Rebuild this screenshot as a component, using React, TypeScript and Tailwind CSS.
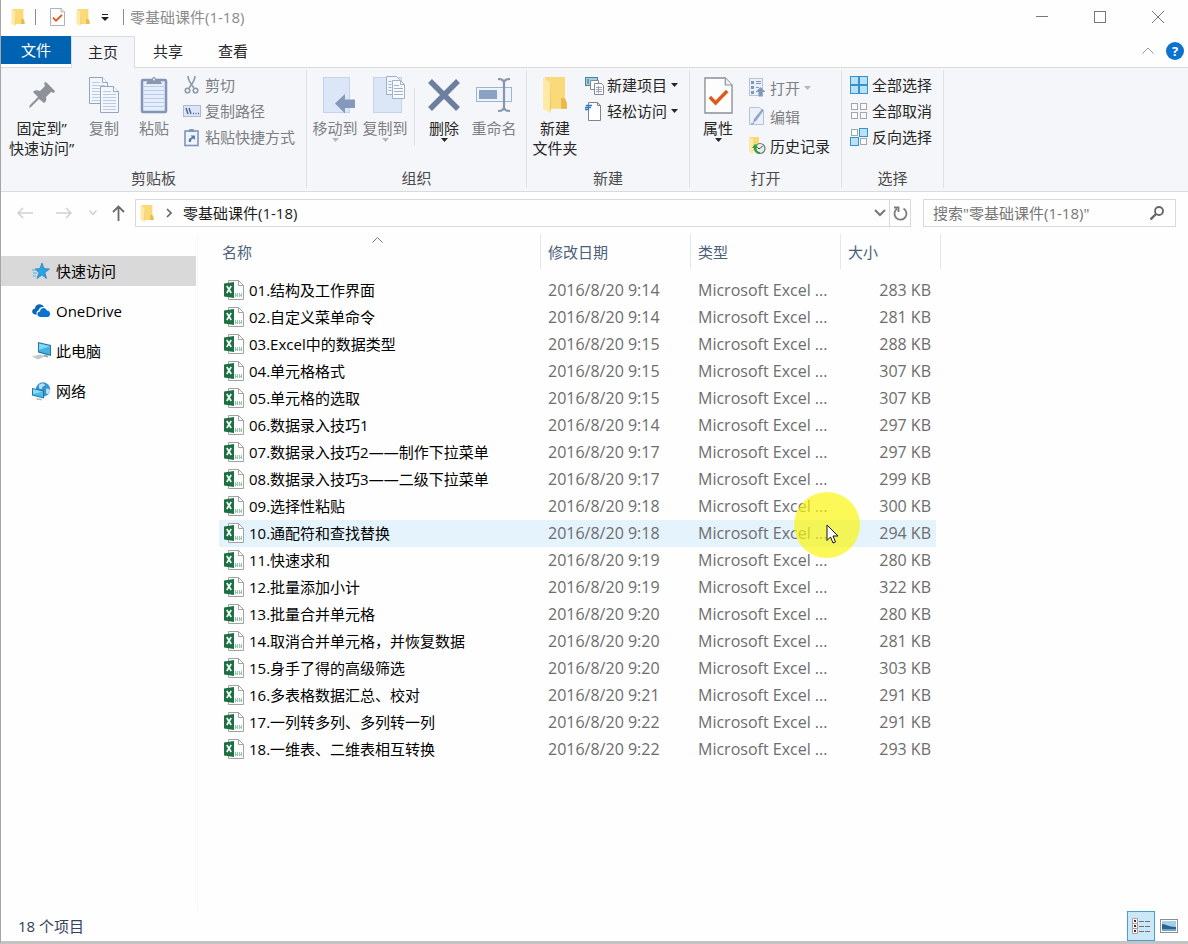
import { ReactNode, useState } from "react";
import clsx from "clsx";

interface FileProps {
    name: string,
    date: string,
    size: string
}

interface ButtonProps {
    icon: ReactNode,
    label: ReactNode,
    disabled?: boolean,
    arrow?: boolean,
    className?: string
}

interface GroupProps {
    label: string,
    className: string,
    children: ReactNode
}

const files: FileProps[] = [
    { name: "01.结构及工作界面", date: "2016/8/20 9:14", size: "283 KB" },
    { name: "02.自定义菜单命令", date: "2016/8/20 9:14", size: "281 KB" },
    { name: "03.Excel中的数据类型", date: "2016/8/20 9:15", size: "288 KB" },
    { name: "04.单元格格式", date: "2016/8/20 9:15", size: "307 KB" },
    { name: "05.单元格的选取", date: "2016/8/20 9:15", size: "307 KB" },
    { name: "06.数据录入技巧1", date: "2016/8/20 9:14", size: "297 KB" },
    { name: "07.数据录入技巧2——制作下拉菜单", date: "2016/8/20 9:17", size: "297 KB" },
    { name: "08.数据录入技巧3——二级下拉菜单", date: "2016/8/20 9:17", size: "299 KB" },
    { name: "09.选择性粘贴", date: "2016/8/20 9:18", size: "300 KB" },
    { name: "10.通配符和查找替换", date: "2016/8/20 9:18", size: "294 KB" },
    { name: "11.快速求和", date: "2016/8/20 9:19", size: "280 KB" },
    { name: "12.批量添加小计", date: "2016/8/20 9:19", size: "322 KB" },
    { name: "13.批量合并单元格", date: "2016/8/20 9:20", size: "280 KB" },
    { name: "14.取消合并单元格，并恢复数据", date: "2016/8/20 9:20", size: "281 KB" },
    { name: "15.身手了得的高级筛选", date: "2016/8/20 9:20", size: "303 KB" },
    { name: "16.多表格数据汇总、校对", date: "2016/8/20 9:21", size: "291 KB" },
    { name: "17.一列转多列、多列转一列", date: "2016/8/20 9:22", size: "291 KB" },
    { name: "18.一维表、二维表相互转换", date: "2016/8/20 9:22", size: "293 KB" },
]

/* ---------- icons ---------- */

function FolderIcon({ width = 14, height = 17 }) {
    return (
        <svg width={width} height={height} viewBox="0 0 26 34" preserveAspectRatio="none">
            <path d="M3 0h20v23l2 1v6H3z" fill="#f9d978" />
            <path d="M19 20h4l2 5v5h-6z" fill="#e9b94c" />
            <path d="M1 1l7 4v29l-7-4z" fill="#fdeaa6" />
            <path d="M8 5l1 25-1 4z" fill="#eec35c" />
        </svg>
    )
}

function CheckDocIcon({ width = 15, height = 18 }) {
    return (
        <svg width={width} height={height} viewBox="0 0 30 37" preserveAspectRatio="none">
            <path d="M1 1h21l7 7v28H1z" fill="#fdfdfd" stroke="#8a8f98" strokeWidth="1.4" />
            <path d="M22 1v7h7" fill="#eef0f3" stroke="#8a8f98" strokeWidth="1.2" />
            <path d="M6 20l6 6L24 14" fill="none" stroke="#dc5a1c" strokeWidth="3.6" />
        </svg>
    )
}

function PinIcon() {
    return (
        <svg width="26" height="26" viewBox="0 0 26 26">
            <path d="M17 0l9 9-1 2-3-1-5 5c1 2 0 5-2 6l-5-4-8 8-2 1 1-3 8-8-5-5c2-2 4-2 7-1l5-5-1-3z" fill="#8d9299" />
        </svg>
    )
}

function PageLines({ x, y, fill = "#f3f7fc" }: { x: number, y: number, fill?: string }) {
    return (
        <g transform={`translate(${x} ${y})`}>
            <path d="M.5.5h13l5 5v21H.5z" fill={fill} stroke="#93a5c3" />
            <path d="M13.5.5v5h5" fill="#fff" stroke="#93a5c3" />
            <path d="M3 5.500h8M3 8.500h13M3 11.500h13M3 14.500h13M3 17.500h13M3 20.500h13M3 23.500h13" stroke="#b9cbe6" />
        </g>
    )
}

function CopyIcon() {
    return (
        <svg width="32" height="38" viewBox="0 0 32 38">
            <PageLines x={1} y={1} />
            <PageLines x={12} y={10} />
        </svg>
    )
}

function PasteIcon() {
    return (
        <svg width="28" height="38" viewBox="0 0 28 38">
            <rect x="2" y="4" width="24" height="32" rx="1" fill="#e4edf9" stroke="#8195b8" strokeWidth="2.500" />
            <path d="M4 10.500h20M4 14.500h20M4 18.500h20M4 22.500h20M4 26.500h20M4 30.500h20" stroke="#bccdea" />
            <path d="M6 8l2-4h4c0-4 4-4 4 0h4l2 4z" fill="#8b98a9" />
            <circle cx="14" cy="3.500" r="1" fill="#f5f6f9" />
        </svg>
    )
}

function ScissorsIcon() {
    return (
        <svg width="18" height="20" viewBox="0 0 18 20" fill="none" stroke="#8d9aab" strokeWidth="1.600">
            <path d="M5 1c0 4 2 7 6 12M12 1c0 4-2 7-6 12" />
            <circle cx="4.500" cy="15.500" r="2.300" />
            <circle cx="12.500" cy="15.500" r="2.300" />
        </svg>
    )
}

function PathIcon() {
    return (
        <svg width="18" height="12" viewBox="0 0 18 12">
            <rect x=".5" y=".5" width="17" height="11" fill="#dbe6f5" stroke="#a9bad5" />
            <path d="M3 3l2 6M6 3l2 6" stroke="#49648f" strokeWidth="1.400" />
            <path d="M10 8.500h1M12.500 8.500h1M15 8.500h1" stroke="#49648f" strokeWidth="1.400" />
        </svg>
    )
}

function ShortcutIcon() {
    return (
        <svg width="18" height="20" viewBox="0 0 18 20">
            <rect x="2" y="4" width="13" height="14.500" fill="#eef4fb" stroke="#8195b8" strokeWidth="1.600" />
            <path d="M5 5l1.500-3h4L12 5z" fill="#8195b8" />
            <path d="M6 15c-1-3 1-4 3-5L7.500 8.500H12V13l-1.500-1.500C9 12 7.500 13 8 15z" fill="#587bb0" />
        </svg>
    )
}

function MoveIcon() {
    return (
        <svg width="40" height="38" viewBox="0 0 40 38">
            <rect x="8.500" y="1.500" width="26" height="35" fill="#dbe7f6" stroke="#c3d4ec" />
            <path d="M20 27.500L30 18v5.500h10V32H30v5.500z" fill="#8499bb" />
        </svg>
    )
}

function CopyToIcon() {
    return (
        <svg width="40" height="38" viewBox="0 0 40 38">
            <rect x="8.500" y="1.500" width="28" height="35" fill="#dbe7f6" stroke="#c3d4ec" />
            <path d="M21.500.5h10l3 3v15h-13z" fill="#f3f7fc" stroke="#9fb0cc" />
            <path d="M27.500 4.500h8l4 4v14h-12z" fill="#f8fafd" stroke="#9fb0cc" />
            <path d="M35.500 4.500v4h4M29 9.500h5M29 12.500h9M29 15.500h9M29 18.500h9M23.500 5.500h3M23.500 8.500h3M23.500 11.500h3M23.500 14.500h3" stroke="#9fb0cc" fill="none" />
        </svg>
    )
}

function DeleteIcon() {
    return (
        <svg width="32" height="34" viewBox="0 0 32 34">
            <path d="M2 3l28 28M30 3L2 31" stroke="#6c7f9f" strokeWidth="5.500" />
        </svg>
    )
}

function RenameIcon() {
    return (
        <svg width="38" height="36" viewBox="0 0 38 36">
            <rect x="1.500" y="10.500" width="35" height="14" fill="#eef4fb" stroke="#9fb3d3" />
            <rect x="4" y="13" width="18" height="9" fill="#8ba1c4" />
            <path d="M23 2c4 0 6 1 6 4v24c0 3-2 4-6 4M35 2c-4 0-6 1-6 4M29 30c0 3 2 4 6 4" fill="none" stroke="#8796ac" strokeWidth="2.200" />
        </svg>
    )
}

function NewItemIcon() {
    return (
        <svg width="19" height="19" viewBox="0 0 19 19">
            <rect x=".5" y="1.500" width="12" height="8" fill="#9fd3e4" stroke="#5b7e92" />
            <path d="M3 3v5" stroke="#2c6a86" />
            <path d="M5.500 4.500h8v9h-8z" fill="#fff" stroke="#7f8a96" />
            <path d="M9.500 7.500h7l2 2v9h-9z" fill="#fff" stroke="#7f8a96" />
            <path d="M11 11.500h6M11 13.500h6M11 15.500h6M13.500 10v7" stroke="#a8a0b0" />
        </svg>
    )
}

function EasyAccessIcon() {
    return (
        <svg width="19" height="19" viewBox="0 0 19 19">
            <path d="M3.500.5h9l3 3v15h-12z" fill="#fff" stroke="#7f8590" />
            <path d="M12.500.5v3h3" fill="none" stroke="#7f8590" />
            <path d="M1 3.500h6M0 5.500h6M0 7.500h4" stroke="#2b78c5" strokeWidth="1.400" />
        </svg>
    )
}

function OpenIcon() {
    return (
        <svg width="18" height="19" viewBox="0 0 18 19">
            <rect x="1.500" y=".5" width="13" height="17" fill="#eaf1fa" stroke="#b4c3da" />
            <path d="M3 3h3v3H3zM3 8h3v3H3zM3 13h3v3H3z" fill="#8297b8" />
            <path d="M8 3.500h5M8 5.500h5M8 9.500h3" stroke="#8297b8" />
            <path d="M12.500 9l5 5h-3v4.500h-4V14h-3z" fill="#8297b8" />
        </svg>
    )
}

function EditIcon() {
    return (
        <svg width="18" height="19" viewBox="0 0 18 19">
            <path d="M1.500.5h10l4 4v13h-14z" fill="#eaf1fa" stroke="#b4c3da" />
            <path d="M16 3L8 14l-3 2 1-4 8-10z" fill="#8fa5c6" />
            <path d="M3 17l3-1" stroke="#8297b8" />
        </svg>
    )
}

function HistoryIcon() {
    return (
        <svg width="18" height="19" viewBox="0 0 18 19">
            <path d="M1 1h10v14H1z" fill="#f9d978" />
            <path d="M1 1l4 2v15l-4-2z" fill="#fdeaa6" />
            <circle cx="12" cy="12.500" r="5" fill="#e8efe9" stroke="#6e8072" strokeWidth="1.200" />
            <path d="M12 12.500l2.500-2.500M12 12.500h-2" stroke="#444" />
            <path d="M12 18c-4 0-6-3-6-6H4l3-4 3.500 4h-2c0 2 1 4 3.500 4z" fill="#2f9e44" />
        </svg>
    )
}

function Squares({ filled }: { filled: boolean[] }) {
    const spots = [[1, 1], [10, 1], [1, 10], [10, 10]]
    return (
        <svg width="19" height="19" viewBox="0 0 19 19">
            {spots.map(([x, y], i) => (
                <rect
                    key={i}
                    x={filled[i] ? x - 0.5 : x + 0.5}
                    y={filled[i] ? y - 0.5 : y + 0.5}
                    width={filled[i] ? 8 : 6}
                    height={filled[i] ? 8 : 6}
                    fill={filled[i] ? "#b9e1f8" : "#fbfbfc"}
                    stroke={filled[i] ? "#3592cf" : "#a3a6ab"}
                />
            ))}
        </svg>
    )
}

function ExcelIcon() {
    return (
        <svg className="shrink-0" width="20" height="20" viewBox="0 0 20 20">
            <path d="M4.500.5h10l5 5v14h-15z" fill="#fff" stroke="#a3a3a3" />
            <path d="M14.500.5v5h5" fill="none" stroke="#a3a3a3" />
            <path d="M11.500 13v4M13.500 13v4M11.500 15.500h2M15.500 13v4M17.500 13v4M15.500 15.500h2" stroke="#93c9a9" />
            <path d="M0 3.500L10 2v16L0 16.500z" fill="#1d7044" />
            <path d="M2.800 6l4.400 7M7.200 6l-4.400 7" stroke="#fff" strokeWidth="1.600" />
        </svg>
    )
}

function StarIcon() {
    return (
        <svg width="18" height="18" viewBox="0 0 18 18">
            <path d="M10 1l2 5.500 5.500.5-4.500 3.500 1.500 6L10 13l-5 3.500 2-6L3 7l5-.5z" fill="#2ea3e3" stroke="#1b7fbd" strokeWidth=".7" />
            <path d="M0 8h5M1 11h4M1 14h3" stroke="#4bb0e8" />
        </svg>
    )
}

function OneDriveIcon() {
    return (
        <svg width="18" height="14" viewBox="0 0 18 14">
            <path d="M5 10.500H3C-1 9.500-.5 5 3 4.500 3.500-.5 10-1 12 3 8 2.500 7 5 6.500 6.500 4.500 7 4 9 5 10.500z" fill="#0a64b8" />
            <path d="M8 13c-3.500-.5-3.500-5.500 0-5.500C8.500 3 14 3 14.800 6.500 19 6.500 19 12.800 15.500 13z" fill="#0a72cf" />
        </svg>
    )
}

function ComputerIcon() {
    return (
        <svg width="20" height="18" viewBox="0 0 20 18">
            <path d="M6 0l13 3v11L6 10.500z" fill="#2079ad" />
            <path d="M7 1.500l11 2.500v8.500L7 9.500z" fill="#45b3e0" />
            <path d="M7 1.500l11 2.500L7 8z" fill="#86d8f2" />
            <path d="M0 14.500l8-2 6 1.500-8 3.500z" fill="#c3cacf" />
            <path d="M12 12.500l4 1v2l-4-1z" fill="#9aa6ad" />
        </svg>
    )
}

function NetworkIcon() {
    return (
        <svg width="20" height="19" viewBox="0 0 20 19">
            <circle cx="11" cy="7.500" r="7.200" fill="#3b94d2" />
            <path d="M7 3c2-2 5-2 6 0-1 2-3 1-3 3s-2 1-3 0zM14 7c2-1 4 0 4 2-1 3-3 4-4 2z" fill="#b9e0f5" />
            <path d="M0 6l12 2.500v8L0 13.500z" fill="#1b75ae" />
            <path d="M1 7.200l10 2.200v5.800l-10-2.500z" fill="#4fbbe6" />
            <path d="M1 7.200l10 2.200-10 2.600z" fill="#8bdaf3" />
            <path d="M5 16l5 1v1.500l-6-1z" fill="#b5bfc5" />
        </svg>
    )
}

function Caret({ className }: { className?: string }) {
    return (
        <svg className={clsx("shrink-0", className)} width="7" height="4" viewBox="0 0 7 4">
            <path d="M0 0h7L3.500 4z" fill="currentColor" />
        </svg>
    )
}

/* ---------- ribbon ---------- */

function BigButton({ icon, label, disabled, arrow, className = "w-[50px]" }: ButtonProps) {
    return (
        <button className={clsx("flex shrink-0 flex-col items-center pt-2 whitespace-nowrap", className, disabled ? "text-[#7c7f84]" : "text-[#262626]")}>
            <span className="flex h-[38px] items-center">{icon}</span>
            <span className="mt-1 leading-5">{label}</span>
            {arrow && <Caret className={disabled ? "text-[#b4b6ba]" : "text-[#262626]"} />}
        </button>
    )
}

function SmallButton({ icon, label, disabled, arrow, className = "h-[26px]" }: ButtonProps) {
    return (
        <button className={clsx("flex items-center whitespace-nowrap", className, disabled ? "text-[#7c7f84]" : "text-[#262626]")}>
            <span className="flex w-[22px] shrink-0">{icon}</span>
            <span>{label}</span>
            {arrow && <Caret className={clsx("ml-1", disabled ? "text-[#b4b6ba]" : "text-[#262626]")} />}
        </button>
    )
}

function Group({ label, className, children }: GroupProps) {
    return (
        <section className={clsx("mt-0.5 mb-[3px] flex shrink-0 flex-col border-r border-[#dfe1e5]", className)}>
            <div className="-mt-0.5 flex flex-1 pl-[3px]">{children}</div>
            <h2 className="text-center leading-5 text-[#4a4a4a]">{label}</h2>
        </section>
    )
}

function Ribbon() {
    return (
        <div className="flex h-[125px] overflow-hidden border-y border-[#dadbdc] bg-[#f5f6f9]">
            <Group label="剪贴板" className="w-[306px]">
                <BigButton icon={<PinIcon />} label={<>固定到”<br />快速访问”</>} className="w-[75px]" />
                <BigButton icon={<CopyIcon />} label="复制" disabled />
                <BigButton icon={<PasteIcon />} label="粘贴" disabled />
                <div className="flex flex-col pt-1 pl-1">
                    <SmallButton icon={<ScissorsIcon />} label="剪切" disabled />
                    <SmallButton icon={<PathIcon />} label="复制路径" disabled />
                    <SmallButton icon={<ShortcutIcon />} label="粘贴快捷方式" disabled />
                </div>
            </Group>
            <Group label="组织" className="w-[220px]">
                <BigButton icon={<MoveIcon />} label="移动到" disabled arrow />
                <BigButton icon={<CopyToIcon />} label="复制到" disabled arrow />
                <div className="mx-1 mt-5 h-[58px] w-px shrink-0 bg-[#dfe1e5]" />
                <BigButton icon={<DeleteIcon />} label="删除" arrow />
                <BigButton icon={<RenameIcon />} label="重命名" disabled />
            </Group>
            <Group label="新建" className="w-[163px]">
                <BigButton icon={<FolderIcon width={26} height={36} />} label={<>新建<br />文件夹</>} />
                <div className="flex flex-col pt-1 pl-[5px]">
                    <SmallButton icon={<NewItemIcon />} label="新建项目" arrow />
                    <SmallButton icon={<EasyAccessIcon />} label="轻松访问" arrow />
                </div>
            </Group>
            <Group label="打开" className="w-[152px]">
                <BigButton icon={<CheckDocIcon width={29} height={37} />} label="属性" arrow />
                <div className="flex flex-col pt-[5px] pl-[5px]">
                    <SmallButton icon={<OpenIcon />} label="打开" disabled arrow className="h-[29px]" />
                    <SmallButton icon={<EditIcon />} label="编辑" disabled className="h-[29px]" />
                    <SmallButton icon={<HistoryIcon />} label="历史记录" className="h-[29px]" />
                </div>
            </Group>
            <Group label="选择" className="w-[102px]">
                <div className="flex flex-col pt-1 pl-[5px]">
                    <SmallButton icon={<Squares filled={[true, true, true, true]} />} label="全部选择" />
                    <SmallButton icon={<Squares filled={[false, false, false, false]} />} label="全部取消" />
                    <SmallButton icon={<Squares filled={[false, true, true, false]} />} label="反向选择" />
                </div>
            </Group>
        </div>
    )
}

/* ---------- window parts ---------- */

function TitleBar() {
    return (
        <header className="flex h-9 items-center pr-px pb-0.5 pl-[10px]">
            <FolderIcon />
            <span className="mx-2.5 h-4 w-px bg-[#8c8c8c]" />
            <button aria-label="属性" className="ml-1"><CheckDocIcon /></button>
            <button aria-label="新建文件夹" className="ml-[11px]"><FolderIcon /></button>
            <button aria-label="自定义快速访问工具栏" className="ml-[11px]">
                <svg width="8" height="8" viewBox="0 0 8 8">
                    <path d="M1 1h6v1H1zM0 4h8L4 8z" fill="#222" />
                </svg>
            </button>
            <span className="ml-3.5 h-4 w-px bg-[#8c8c8c]" />
            <h1 className="ml-1.5 flex-1 text-[#8b8b8b]">零基础课件(1-18)</h1>
            <button aria-label="最小化" className="flex w-[58px] justify-center">
                <svg width="12" height="12" viewBox="0 0 12 12"><path d="M0 5.500h12" stroke="#777" /></svg>
            </button>
            <button aria-label="最大化" className="flex w-[58px] justify-center">
                <svg width="12" height="12" viewBox="0 0 12 12"><rect x=".5" y=".5" width="11" height="11" fill="none" stroke="#777" /></svg>
            </button>
            <button aria-label="关闭" className="flex w-[58px] justify-center">
                <svg width="12" height="12" viewBox="0 0 12 12"><path d="M0 0l12 12M12 0L0 12" stroke="#777" /></svg>
            </button>
        </header>
    )
}

function Tabs() {
    return (
        <nav className="flex h-[31px] text-[#262626]">
            <button className="h-7 w-[70px] bg-[#0063b1] text-white">文件</button>
            <button className="relative z-10 -mb-px w-16 border-x border-t border-[#dadbdc] bg-[#f5f6f9] pb-0.5">主页</button>
            <button className="w-[66px] pb-0.5">共享</button>
            <button className="w-[64px] pb-0.5">查看</button>
            <div className="ml-auto flex items-center gap-3 pr-1 pb-0.5">
                <button aria-label="最小化功能区">
                    <svg width="12" height="7" viewBox="0 0 12 7"><path d="M.5 6.500L6 1l5.500 5.500" fill="none" stroke="#999" /></svg>
                </button>
                <button className="size-[18px] rounded-full bg-[#0c72cf] text-[13px] leading-[18px] font-bold text-white">?</button>
            </div>
        </nav>
    )
}

function AddressBar() {
    return (
        <div className="flex h-[42px] items-center pr-3 pl-4">
            <button aria-label="后退">
                <svg width="16" height="12" viewBox="0 0 16 12" fill="none" stroke="#cfcfcf" strokeWidth="1.400"><path d="M1 6h15M6 1L1 6l5 5" /></svg>
            </button>
            <button aria-label="前进" className="ml-[23px]">
                <svg width="16" height="12" viewBox="0 0 16 12" fill="none" stroke="#cfcfcf" strokeWidth="1.400"><path d="M0 6h15M10 1l5 5-5 5" /></svg>
            </button>
            <button aria-label="最近浏览的位置" className="ml-[17px]">
                <svg width="8" height="6" viewBox="0 0 8 6" fill="none" stroke="#cfcfcf" strokeWidth="1.400"><path d="M.5.500L4 4.500 7.500.5" /></svg>
            </button>
            <button aria-label="上移" className="ml-[15px]">
                <svg width="13" height="16" viewBox="0 0 13 16" fill="none" stroke="#6a6a6a" strokeWidth="1.800"><path d="M6.500 16V1.500M1 7l5.500-5.500L12 7" /></svg>
            </button>
            <div className="ml-[10px] flex h-7 flex-1 items-center border border-[#d9d9d9] pl-1">
                <FolderIcon />
                <svg className="ml-3 shrink-0" width="6" height="10" viewBox="0 0 6 10" fill="none" stroke="#666" strokeWidth="1.600"><path d="M1 1l4 4-4 4" /></svg>
                <span className="ml-[11px] flex-1 text-[#1a1a1a]">零基础课件(1-18)</span>
                <button aria-label="以前的位置" className="mr-[3px]">
                    <svg width="12" height="8" viewBox="0 0 12 8" fill="none" stroke="#777" strokeWidth="2"><path d="M1 1l5 5 5-5" /></svg>
                </button>
                <button aria-label="刷新" className="flex h-full w-[21px] items-center justify-center border-l border-[#d9d9d9]">
                    <svg width="15" height="15" viewBox="0 0 15 15" fill="none" stroke="#7a7a7a" strokeWidth="1.800">
                        <path d="M10.500 2.500A6 6 0 1 1 4 2.800" />
                        <path d="M1 1.500h4.500V6" />
                    </svg>
                </button>
            </div>
            <label className="ml-3 flex h-7 w-[253px] items-center border border-[#d9d9d9] pr-[11px] pl-[9px]">
                <input
                    type="search"
                    aria-label="搜索"
                    placeholder={'搜索"零基础课件(1-18)"'}
                    className="min-w-0 flex-1 bg-transparent outline-none placeholder:text-[#767676]"
                />
                <svg width="14" height="14" viewBox="0 0 14 14" fill="none" stroke="#666" strokeWidth="1.800">
                    <circle cx="9" cy="5" r="4" />
                    <path d="M6 8l-5.500 5.500" strokeWidth="2.400" />
                </svg>
            </label>
        </div>
    )
}

function Sidebar() {
    const places = [
        { label: "快速访问", icon: <StarIcon /> },
        { label: "OneDrive", icon: <OneDriveIcon /> },
        { label: "此电脑", icon: <ComputerIcon /> },
        { label: "网络", icon: <NetworkIcon /> },
    ]
    const [current, setCurrent] = useState("快速访问")

    return (
        <aside className="flex w-[197px] shrink-0 flex-col gap-2.5 border-r border-[#f7f7f7] pt-[22px]">
            {places.map((item) => (
                <button
                    key={item.label}
                    onClick={() => setCurrent(item.label)}
                    className={clsx("mr-px flex h-[30px] items-center pl-[31px] text-black", current === item.label && "bg-[#d9d9d9]")}
                >
                    <span className="flex w-6">{item.icon}</span>
                    {item.label}
                </button>
            ))}
        </aside>
    )
}

function Pointer() {
    return (
        <div className="pointer-events-none absolute -top-7 left-[103px] z-10 size-[66px]">
            <div className="size-full rounded-full bg-[#faf510]/70" />
            <svg className="absolute top-8 left-8" width="13" height="20" viewBox="0 0 13 20">
                <path d="M1 1v15.500l3.500-3.500 2.500 6 2.500-1-2.500-6H12z" fill="#fff" stroke="#111" />
            </svg>
        </div>
    )
}

function FileList() {
    const [hovered, setHovered] = useState(9)
    const head = "mb-2 flex h-[35px] items-center border-r border-[#e4e7ec]"

    return (
        <table className="w-[722px] table-fixed text-left">
            <colgroup>
                <col className="w-[322px]" />
                <col className="w-[150px]" />
                <col className="w-[150px]" />
                <col className="w-[100px]" />
            </colgroup>
            <thead className="text-[#4c607a]">
                <tr>
                    <th className="relative p-0 font-normal">
                        <div className={clsx(head, "pl-[3px]")}>名称</div>
                        <svg className="absolute top-[3px] left-[153px]" width="11" height="6" viewBox="0 0 11 6"><path d="M.5 5.500l5-5 5 5" fill="none" stroke="#777" /></svg>
                    </th>
                    <th className="p-0 font-normal"><div className={clsx(head, "pl-[7px]")}>修改日期</div></th>
                    <th className="p-0 font-normal"><div className={clsx(head, "pl-[7px]")}>类型</div></th>
                    <th className="p-0 font-normal"><div className={clsx(head, "pl-[7px]")}>大小</div></th>
                </tr>
            </thead>
            <tbody>
                {files.map((file, index) => {
                    const row = clsx("flex h-[27px] items-center pb-px whitespace-nowrap", hovered === index && "bg-[#e5f3fd]")
                    return (
                        <tr key={file.name} onMouseEnter={() => setHovered(index)} className="text-base text-[#6d6d6d]">
                            <td className="p-0">
                                <div className={clsx(row, "gap-[5px] pl-[5px] text-[15px] text-black")}>
                                    <ExcelIcon />
                                    {file.name}
                                </div>
                            </td>
                            <td className="p-0"><div className={clsx(row, "pl-[7px]")}>{file.date}</div></td>
                            <td className="relative p-0">
                                <div className={clsx(row, "pl-[7px]")}>Microsoft Excel ...</div>
                                {index === 9 && <Pointer />}
                            </td>
                            <td className="p-0 pr-[5px]"><div className={clsx(row, "justify-end pr-[5px]")}>{file.size}</div></td>
                        </tr>
                    )
                })}
            </tbody>
        </table>
    )
}

function StatusBar() {
    return (
        <footer className="flex h-[30px] items-center pl-[17px] text-[#33415c]">
            <span className="flex-1">18 个项目</span>
            <button aria-label="详细信息" className="flex h-full w-7 items-center justify-center border border-[#4a9fd0] bg-[#cbe8f8]">
                <svg width="20" height="17" viewBox="0 0 20 17">
                    <path d="M1.500.5h5v5h-5zM1.500 5.500h5v5h-5zM1.500 10.500h5v5h-5z" fill="#fff" stroke="#b39a9a" />
                    <path d="M3 3h2M3 8h2M3 13h2" stroke="#333" strokeWidth="2" />
                    <path d="M8 3.500h5M14 3.500h5M8 8.500h5M14 8.500h5M8 13.500h5M14 13.500h5" stroke="#6d7378" />
                </svg>
            </button>
            <button aria-label="大图标" className="mr-2.5 ml-[5px]">
                <svg width="18" height="14" viewBox="0 0 18 14">
                    <rect x=".5" y=".5" width="17" height="13" fill="#fff" stroke="#8b8f94" />
                    <path d="M2 2h14v6H2z" fill="#9fd0f2" />
                    <path d="M2 5c4 0 6 3 14 3v4H2z" fill="#2d6187" />
                    <path d="M2 10h14v2H2z" fill="#6ea5c9" />
                </svg>
            </button>
        </footer>
    )
}

export default function App() {
    return (
        <div className="flex min-h-screen flex-col border-b-[3px] border-l border-b-[#c4c4c4] border-l-[#a6a6a6] bg-[#fefefe] font-['Open_Sans','Noto_Sans_CJK_SC',sans-serif] text-[15px] leading-5">
            <TitleBar />
            <Tabs />
            <Ribbon />
            <AddressBar />
            <main className="flex flex-1">
                <Sidebar />
                <div className="flex-1 pl-[21px]">
                    <FileList />
                </div>
            </main>
            <StatusBar />
        </div>
    )
}
